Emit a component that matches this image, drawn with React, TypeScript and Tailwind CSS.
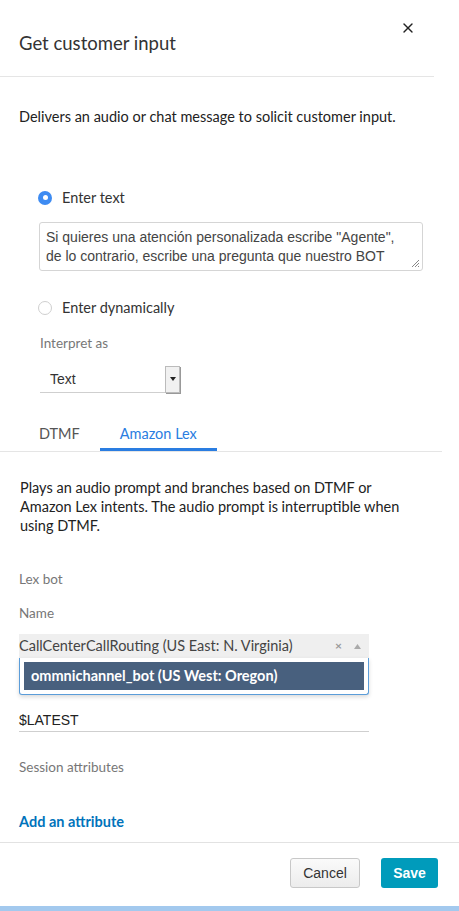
import { X } from "lucide-react";

const ember = "font-['Lato','Noto_Sans',sans-serif]";

function Radio({ checked, label }: { checked: boolean; label: string }) {
  return (
    <label className="flex items-center gap-[10px] text-[14.5px] text-[#333]">
      {checked ? (
        <span className="flex h-[14px] w-[14px] items-center justify-center rounded-full bg-[#3d8bf2]">
          <span className="h-[5px] w-[5px] rounded-full bg-white" />
        </span>
      ) : (
        <span className="h-[14px] w-[14px] rounded-full border border-[#cfcfcf] bg-white" />
      )}
      {label}
    </label>
  );
}

export default function App() {
  return (
    <div className={`relative h-[911px] w-[459px] overflow-hidden bg-white ${ember}`}>
      <div className="flex h-[906px] flex-col">
        <header className="flex h-[77px] w-[434px] items-start justify-between border-b border-[#e5e5e5] pl-[19px]">
          <h1 className="pt-[31px] text-[18.5px] leading-[24px] text-[#333]">Get customer input</h1>
          <button className="mr-[18px] mt-[20px] text-[#222]">
            <X className="h-[16px] w-[16px]" strokeWidth={2} />
          </button>
        </header>

        <p className="pl-[19px] pt-[31px] text-[14.5px] leading-[18px] text-[#222]">
          Delivers an audio or chat message to solicit customer input.
        </p>

        <div className="pl-[38px] pt-[61px]">
          <Radio checked label="Enter text" />
          <div className="relative ml-px mt-[13px] h-[49px] w-[384px] rounded-[3px] border border-[#d5d5d5] px-[6px] py-[5px] font-['Liberation_Sans',Arial,sans-serif] text-[14px] leading-[19px] text-[#444]">
            <div className="whitespace-nowrap">Si quieres una atención personalizada escribe "Agente",</div>
            <div className="whitespace-nowrap">de lo contrario, escribe una pregunta que nuestro BOT</div>
            <svg className="absolute bottom-[2px] right-[2px]" width="10" height="10" viewBox="0 0 10 10">
              <path d="M9 2 L2 9 M9 5 L5 9 M9 8 L8 9" stroke="#888" strokeWidth="1" />
            </svg>
          </div>
          <div className="mt-[26px]">
            <Radio checked={false} label="Enter dynamically" />
          </div>
          <div className="ml-[2px] mt-[16px] text-[13.5px] leading-[16px] text-[#777]">Interpret as</div>
          <div className="ml-[2px] mt-[15px] flex h-[27px] w-[140px] items-stretch border-b border-[#cfcfcf]">
            <span className="flex-1 pl-[10px] pt-[3px] font-['Liberation_Sans',Arial,sans-serif] text-[14px] text-[#333]">Text</span>
            <span className="mb-[-1px] flex w-[15px] items-center justify-center border border-[#bbb] bg-[#f1f1f1] shadow-[1px_1px_0_#999]">
              <svg width="6" height="4" viewBox="0 0 6 4">
                <path d="M0 0 H6 L3 4 Z" fill="#222" />
              </svg>
            </span>
          </div>
        </div>

        <div className="mt-[30px] flex w-[442px] border-b border-[#e5e5e5] pl-[39px] text-[14.5px]">
          <span className="pb-[7px] text-[#555]">DTMF</span>
          <span className="ml-[20px] border-b-[3px] border-[#2a7de1] px-[20px] pb-[4px] text-[#2a7de1]">Amazon Lex</span>
        </div>

        <p className="w-[420px] pl-[20px] pt-[26px] text-[14.5px] leading-[19px] text-[#222]">
          Plays an audio prompt and branches based on DTMF or Amazon Lex intents. The audio prompt is interruptible when using DTMF.
        </p>

        <div className="pl-[19px]">
          <div className="mt-[36px] text-[13.5px] leading-[16px] text-[#777]">Lex bot</div>
          <div className="mt-[18px] text-[13.5px] leading-[16px] text-[#777]">Name</div>

          <div className="relative mt-[13px] w-[350px]">
            <div className="flex h-[24px] items-center bg-[#efefef] text-[14.5px] text-[#444]">
              <span className="flex-1">CallCenterCallRouting (US East: N. Virginia)</span>
              <span className="mr-[12px] text-[12px] font-bold text-[#999]">×</span>
              <svg className="mr-[8px]" width="7" height="5" viewBox="0 0 7 5">
                <path d="M0 5 L3.5 0 L7 5 Z" fill="#aaa" />
              </svg>
            </div>
            <div className="absolute left-0 top-[24px] z-10 w-[350px] rounded-b-[3px] border border-t-0 border-[#5b9dd9] bg-white px-[4px] pb-[4px] pt-[4px] shadow-[0_2px_4px_rgba(0,0,0,0.15)]">
              <div className="flex h-[28px] items-center bg-[#48607e] pl-[7px] text-[14.5px] font-bold text-white">
                ommnichannel_bot (US West: Oregon)
              </div>
            </div>
            <div className="mt-[54px] h-[20px] w-[350px] border-b border-[#cfcfcf] font-['Liberation_Sans',Arial,sans-serif] text-[14px] leading-[16px] text-[#222]">
              $LATEST
            </div>
          </div>

          <div className="mt-[27px] text-[13.5px] leading-[16px] text-[#777]">Session attributes</div>
          <div className="mt-[38px] text-[14.5px] font-bold leading-[18px] text-[#0073bb]">Add an attribute</div>
        </div>

        <footer className="mt-[11px] flex border-t border-[#e2e2e2] pr-[21px] pt-[15px]">
          <div className="ml-auto flex gap-[21px] font-['Liberation_Sans',Arial,sans-serif] text-[14px]">
            <button className="h-[30px] w-[70px] rounded-[3px] border border-[#c8c8c8] bg-gradient-to-b from-[#fafafa] to-[#ececec] text-[#333]">
              Cancel
            </button>
            <button className="h-[30px] w-[57px] rounded-[3px] bg-[#009bbb] font-bold text-white">Save</button>
          </div>
        </footer>
      </div>
      <div className="absolute bottom-0 left-0 h-[5px] w-full bg-[#a3c9ee]" />
    </div>
  );
}
